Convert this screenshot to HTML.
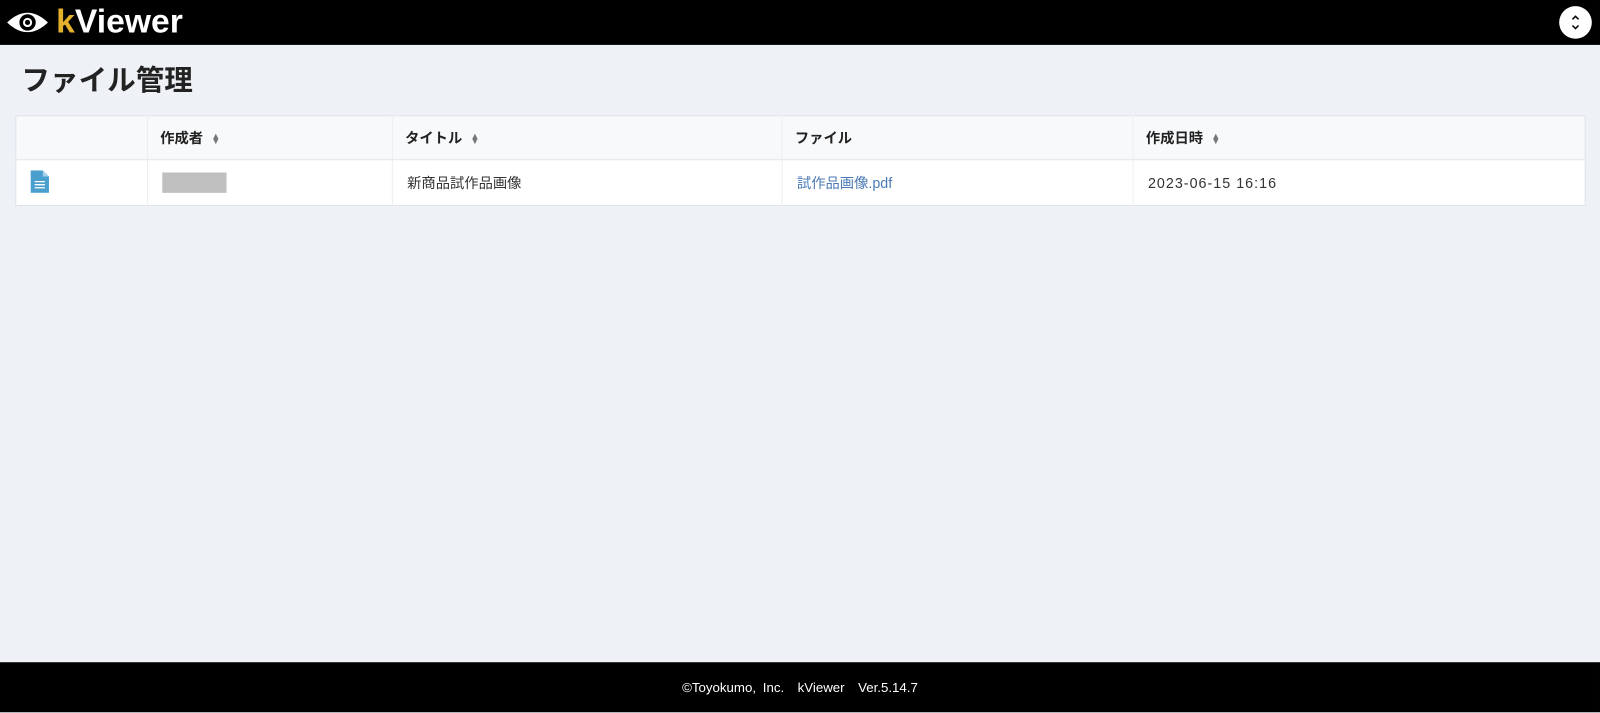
<!DOCTYPE html>
<html><head><meta charset="utf-8"><style>
*{margin:0;padding:0;box-sizing:border-box}
body{width:1600px;height:712px;background:#eef1f6;font-family:"Liberation Sans","Noto Sans CJK JP",sans-serif;position:relative;overflow:hidden}
.w{position:absolute;left:0;top:0;width:1568px;height:698px;transform:scale(1.0204);transform-origin:0 0}
.hd{position:absolute;left:0;top:0;width:1568px;height:44px;background:#000}
.logo{position:absolute;left:55px;top:2px;font-size:33px;font-weight:bold;color:#fff}
.logo b{color:#e3b12c}
.btn{position:absolute;left:1528px;top:6px;width:32px;height:32px;border-radius:50%;background:#fff}
h1{position:absolute;left:21px;top:57px;font-size:28px;font-weight:bold;color:#222}
table{position:absolute;left:15px;top:113px;width:1539px;border-collapse:collapse;background:#fff;border:1px solid #dde2e8;font-size:14px;color:#333}
th{height:43px;background:#f8f9fb;text-align:left;font-weight:bold;padding-left:12px;border-bottom:1px solid #e3e6ea;border-left:1px solid #eceef1;color:#222}
td{height:45px;padding-left:14px;border-left:1px solid #eceef1}
.s{display:inline-block;margin-left:8px;font-size:9px;color:#777;vertical-align:middle;line-height:5px}
a{color:#4a7ab5;text-decoration:none}
.ft{position:absolute;left:0;top:649px;width:1568px;height:49px;background:#000;color:#fff;font-size:13px;text-align:center;line-height:50px;word-spacing:3px}
</style></head><body><div class="w">
<div class="hd">
<svg style="position:absolute;left:6px;top:9px" width="42" height="26" viewBox="0 0 42 26"><path d="M1 13 Q21 -6 41 13 Q21 32 1 13Z" fill="#fff"/><circle cx="21" cy="13" r="8" fill="#000"/><circle cx="21" cy="13" r="4.5" fill="#fff"/><circle cx="21" cy="13" r="2.5" fill="#000"/></svg>
<div class="logo"><b>k</b>Viewer</div>
<div class="btn"><svg width="32" height="32" viewBox="0 0 32 32"><path d="M13 13l3-3 3 3M13 19l3 3 3-3" stroke="#000" stroke-width="1.5" fill="none"/></svg></div>
</div>
<h1>ファイル管理</h1>
<table>
<tr><th style="width:129px;border-left:none"></th><th style="width:240px">作成者<span class="s">▲<br>▼</span></th><th style="width:382px">タイトル<span class="s">▲<br>▼</span></th><th style="width:344px">ファイル</th><th>作成日時<span class="s">▲<br>▼</span></th></tr>
<tr><td style="border-left:none"><svg width="18" height="22" viewBox="0 0 18 22"><path d="M0 0h12l6 6v16H0z" fill="#4a9fcf"/><path d="M12 0v6h6" fill="#a6d2ea"/><path d="M4 11h10M4 14h10M4 17h10" stroke="#fff" stroke-width="1.3"/></svg></td><td><div style="width:63px;height:20px;background:#c0c0c0"></div></td><td>新商品試作品画像</td><td><a>試作品画像.pdf</a></td><td style="letter-spacing:1px">2023-06-15 16:16</td></tr>
</table>
<div class="ft">©Toyokumo, Inc.&nbsp; kViewer&nbsp; Ver.5.14.7</div>
</div></body></html>
